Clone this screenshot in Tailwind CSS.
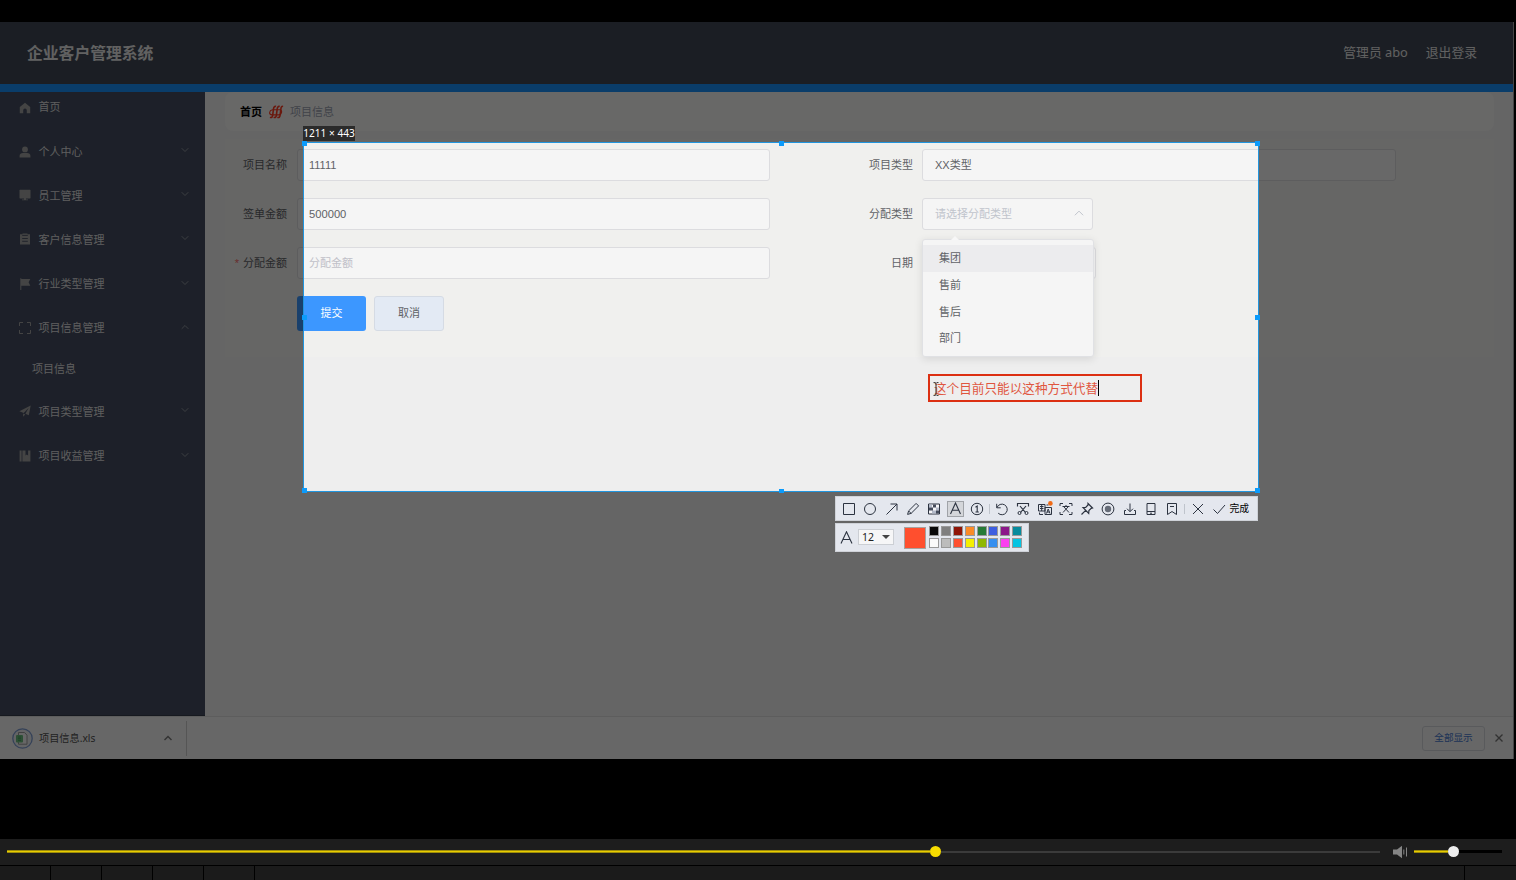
<!DOCTYPE html>
<html lang="zh-CN">
<head>
<meta charset="utf-8">
<title>企业客户管理系统</title>
<script src="https://cdn.jsdelivr.net/npm/@tailwindcss/browser@4"></script>
</head>
<body class="w-[1516px] h-[880px] overflow-hidden bg-black flex flex-col font-['Noto_Sans','Noto_Sans_CJK_SC',sans-serif] text-[11px]">
<svg class="hidden">
  <symbol id="down" viewBox="0 0 8 8"><path d="M.7 2.2 4 5.5l3.3-3.3" fill="none" stroke="currentColor" stroke-width=".8"/></symbol>
  <symbol id="up" viewBox="0 0 8 8"><path d="M.7 5.8 4 2.5l3.3 3.3" fill="none" stroke="currentColor" stroke-width=".8"/></symbol>
</svg>

<!-- Recorded desktop -->
<main class="relative mt-[22px] h-[737px] w-[1514px] overflow-hidden flex flex-col shrink-0 bg-[#ececec] border-r border-[#444]">
  <header class="h-[62px] shrink-0 bg-[#404855] flex items-center justify-between pl-[27px] pr-9 text-[#f4f4f4]">
    <h1 class="text-[15.8px] leading-none font-bold text-[#e6e6e6] pt-[2px]">企业客户管理系统</h1>
    <div class="flex gap-[18px] text-[12.8px] leading-none text-[#e4e4e4] pb-px"><span>管理员 abo</span><span>退出登录</span></div>
  </header>
  <div class="h-2 shrink-0 bg-[#1890fb]"></div>

  <div class="flex h-[624px] shrink-0">
    <nav class="w-[205px] shrink-0 bg-[#454d61] border-b border-[#343b4b] text-[#dedede] leading-none">
      <div class="h-[37px] pb-2 pl-[19px] flex items-center gap-[7.500px]"><svg class="size-3 mt-0.5 text-[#a0a0a0]" viewBox="0 0 12 12" fill="currentColor"><path d="M6 .8 11.2 5v6.2H7.8V8.4a1.8 1.8 0 0 0-3.6 0v2.8H.8V5z"/></svg><span>首页</span></div>
      <div class="h-[44.2px] pl-[19px] pr-4 flex items-center gap-[7.500px]"><svg class="size-3 mt-0.5 text-[#a0a0a0]" viewBox="0 0 12 12" fill="currentColor"><circle cx="6" cy="3.4" r="2.9"/><path d="M.6 11.5V9.7c0-1.8 1.5-2.6 3.2-2.6h4.4c1.7 0 3.2.8 3.2 2.6v1.8z"/></svg><span class="grow">个人中心</span><svg class="size-2 -mt-0.5 text-[#a0a4ab]"><use href="#down"/></svg></div>
      <div class="h-[44.2px] pl-[19px] pr-4 flex items-center gap-[7.500px]"><svg class="size-3 text-[#a0a0a0]" viewBox="0 0 12 12" fill="currentColor"><rect x=".5" y=".8" width="11" height="8.6" rx=".6"/><path d="M5 9h2v1.5h2v.8H3v-.8h2z"/></svg><span class="grow">员工管理</span><svg class="size-2 -mt-0.5 text-[#a0a4ab]"><use href="#down"/></svg></div>
      <div class="h-[44.2px] pl-[19px] pr-4 flex items-center gap-[7.500px]"><svg class="size-3 text-[#a0a0a0]" viewBox="0 0 12 12"><path fill="currentColor" d="M1 1.3h2.5V.4h5v.9H11v10.3H1z"/><path d="M3.2 2.4h5.6M3.2 5.5h5.6M3.2 8.3h5.6" stroke="#454d61" stroke-width=".9"/></svg><span class="grow">客户信息管理</span><svg class="size-2 -mt-0.5 text-[#a0a4ab]"><use href="#down"/></svg></div>
      <div class="h-[44.2px] pl-[19px] pr-4 flex items-center gap-[7.500px]"><svg class="size-3 text-[#a0a0a0]" viewBox="0 0 12 12" fill="currentColor"><path d="M1.3.3h1v.6h9L9.6 4.2l1.7 3.5h-9v4.2h-1z"/></svg><span class="grow">行业类型管理</span><svg class="size-2 -mt-0.5 text-[#a0a4ab]"><use href="#down"/></svg></div>
      <div class="h-[44.2px] pl-[19px] pr-4 flex items-center gap-[7.500px]"><svg class="size-3 text-[#a0a0a0]" viewBox="0 0 12 12" fill="none" stroke="currentColor"><path d="M.5 4V.5H4M8 .5h3.5V4M11.5 8v3.5H8M4 11.5H.5V8"/></svg><span class="grow">项目信息管理</span><svg class="size-2 -mt-0.5 text-[#a0a4ab]"><use href="#up"/></svg></div>
      <div class="h-[39.3px] pl-8 pb-[2px] flex items-center"><span>项目信息</span></div>
      <div class="h-[44.2px] pl-[19px] pr-4 flex items-center gap-[7.500px]"><svg class="size-3 text-[#a0a0a0]" viewBox="0 0 12 12" fill="currentColor"><path d="M11.7.6 9.8 10.2 6.4 8.7 9.6 3 4.7 7.9.4 6.2zM4.2 8.6l2 .9-2.1 2.3z"/></svg><span class="grow">项目类型管理</span><svg class="size-2 -mt-0.5 text-[#a0a4ab]"><use href="#down"/></svg></div>
      <div class="h-[44.2px] pl-[19px] pr-4 flex items-center gap-[7.500px]"><svg class="size-3 text-[#a0a0a0]" viewBox="0 0 12 12" fill="currentColor"><path d="M.6.6h2v11h-2zM3.4.6h3.1v5l1.3-1 1.3 1v-5h2.3v11h-8z"/></svg><span class="grow">项目收益管理</span><svg class="size-2 -mt-0.5 text-[#a0a4ab]"><use href="#down"/></svg></div>
    </nav>

    <section class="grow pl-5 pr-[19px] bg-[#eeeeee]">
      <div class="h-[39px] rounded-lg bg-[#f5f5f4] flex items-center pl-[15px] leading-none">
        <b class="text-black">首页</b>
        <svg class="w-4 h-[14px] mx-[6px]" viewBox="0 0 16 14" fill="none" stroke="#fa3a20" stroke-width="1.600"><path d="M2 12.200c1.500.8 2.500 0 2.700-2l.8-6.400C5.700 2 6.700 1 8 1.600M5.700 12.200c1.500.8 2.500 0 2.700-2l.8-6.400C9.400 2 10.400 1 11.700 1.600M9.400 12.200c1.500.8 2.500 0 2.700-2l.8-6.400C13.100 2 13.900 1 15 1.600"/><path d="M4.500 4.800C1 5.500.5 9.500 4 9.900M4.500 4.800h7.500c2.500.6 2 4.500-1 5.100H4" stroke-width="1.100"/></svg>
        <span class="text-[#9aa0ad]">项目信息</span>
      </div>
      <form class="mt-2 h-[218px] bg-[#f0f0ee] pt-[10px] flex text-[#606266] leading-none">
        <div class="w-[545px] shrink-0 flex flex-col gap-[17px]">
          <div class="h-8 flex items-center"><label class="w-[62px] text-right mr-[10px] pb-[2px]">项目名称</label><div class="grow h-8 rounded-[3px] border border-[#dcdcdf] bg-[#f5f5f5] flex items-center pl-[11px] font-['Liberation_Sans',sans-serif]">11111</div></div>
          <div class="h-8 flex items-center"><label class="w-[62px] text-right mr-[10px] pb-[2px]">签单金额</label><div class="grow h-8 rounded-[3px] border border-[#dcdcdf] bg-[#f5f5f5] flex items-center pl-[11px] pt-px font-['Liberation_Sans',sans-serif] text-[11.200px]">500000</div></div>
          <div class="h-8 flex items-center"><label class="w-[62px] text-right mr-[10px] pb-px whitespace-nowrap"><span class="text-[#f56c6c] mr-1 font-['Liberation_Sans',sans-serif]">*</span>分配金额</label><div class="grow h-8 rounded-[3px] border border-[#dcdcdf] bg-[#f5f5f5] flex items-center pl-[11px] pb-[2px] text-[#c0c0c8]">分配金额</div></div>
          <div class="flex gap-2"><div class="ml-[72px] w-[69px] h-[35px] rounded-[3px] bg-[#3c97ff] text-white flex items-center justify-center pb-[2px]">提交</div><div class="w-[70px] h-[35px] rounded-[3px] border border-[#d5dbe4] bg-[#e3eaf4] flex items-center justify-center pb-[2px]">取消</div></div>
        </div>
        <div class="ml-[83px] w-[543px] shrink-0 flex flex-col gap-[17px]">
          <div class="h-8 flex items-center"><label class="w-[60px] text-right mr-[9px] pb-[2px]">项目类型</label><div class="grow h-8 rounded-[3px] border border-[#dcdcdf] bg-[#f5f5f5] flex items-center pl-3 pt-px font-['Liberation_Sans','Noto_Sans_CJK_SC',sans-serif]"><span>XX类型</span></div></div>
          <div class="h-8 flex items-center"><label class="w-[60px] text-right mr-[9px] pb-[2px]">分配类型</label><div class="w-[171px] h-8 rounded-[3px] border border-[#dcdcdf] bg-[#f5f5f5] flex items-center justify-between pl-3 pr-2 pb-[2px] text-[#c0c4cc]"><span>请选择分配类型</span><svg class="size-[10px]"><use href="#up"/></svg></div></div>
          <div class="h-8 flex items-center"><label class="w-[60px] text-right mr-[9px] pb-[2px]">日期</label><div class="w-[174px] h-8 rounded-[3px] border border-[#dcdcdf] bg-[#f5f5f5]"></div></div>
        </div>
      </form>
    </section>
  </div>

  <footer class="h-[43px] shrink-0 bg-[#f3f3f3] border-t border-[#dcdcdc] flex items-center pl-3 pr-[10px] text-[#505050] leading-none">
    <svg class="size-[21px] mr-[6px]" viewBox="0 0 21 21"><circle cx="10.500" cy="10.500" r="9.700" fill="#e9ebee" stroke="#7d9bd0" stroke-width="1.300"/><path d="M6.500 4.500h6l2.500 2.700v9H6.500z" fill="#f3f3f3" stroke="#999"/><rect x="4" y="7" width="7" height="7.500" rx="1" fill="#6cbb7e"/><path d="M6 9h3M6 10.700h3M6 12.400h3" stroke="#3f9a55" stroke-width=".8"/></svg>
    <span class="text-[10.2px] w-[125px]">项目信息.xls</span>
    <svg class="size-2" viewBox="0 0 8 8"><path d="M.5 6 4 2.500 7.500 6" fill="none" stroke="#777" stroke-width="1.400"/></svg>
    <div class="ml-[14px] h-[35px] w-px bg-[#c9c9c9]"></div>
    <div class="ml-auto w-[63px] h-[25px] rounded-[3px] border border-[#d3d5d9] flex items-center justify-center text-[9.600px] text-[#4577cc]">全部显示</div>
    <svg class="ml-[10px] size-2" viewBox="0 0 8 8"><path d="m.5.5 7 7m0-7-7 7" stroke="#777" stroke-width="1.400"/></svg>
  </footer>

  <!-- Select dropdown -->
  <ul class="absolute left-[922px] top-[217px] w-[172px] h-[118px] rounded-[3px] border border-[#e0e1e4] bg-[#f5f5f5] shadow-[0_2px_9px_rgba(0,0,0,.11)] pt-[5px] text-[#606266] leading-[26.800px]">
    <li class="absolute left-[28px] -top-[4px] size-0 border-x-4 border-x-transparent border-b-4 border-b-[#f7f7f7]"></li>
    <li class="h-[26.800px] pl-4 bg-[#ececee]">集团</li><li class="h-[26.800px] pl-4">售前</li><li class="h-[26.800px] pl-4">售后</li><li class="h-[26.800px] pl-4">部门</li>
  </ul>

  <!-- Capture selection: everything outside it is dimmed -->
  <div class="absolute left-[304px] top-[121px] w-[954px] h-[348px] shadow-[0_0_0_2000px_rgba(0,0,0,.575)]"></div>
  <div class="absolute left-[303px] top-[120px] w-[956px] h-[350px] border border-[#2195de]">
    <i class="absolute -left-[2px] -top-[2px] size-[5px] bg-[#0c9bfb]"></i><i class="absolute left-[475px] -top-[2px] w-[5px] h-[5px] bg-[#0c9bfb]"></i><i class="absolute -right-[2px] -top-[2px] size-[5px] bg-[#0c9bfb]"></i>
    <i class="absolute -left-[2px] top-[172px] size-[5px] bg-[#0c9bfb]"></i><i class="absolute -right-[2px] top-[172px] size-[5px] bg-[#0c9bfb]"></i>
    <i class="absolute -left-[2px] -bottom-[2px] size-[5px] bg-[#0c9bfb]"></i><i class="absolute left-[475px] -bottom-[2px] w-[5px] h-1 bg-[#0c9bfb]"></i><i class="absolute -right-[2px] -bottom-[2px] size-[5px] bg-[#0c9bfb]"></i>
  </div>
  <div class="absolute left-[303px] top-[104px] w-[52px] h-[15px] bg-[#2b2b2b] text-white text-[10.100px] leading-[15px] flex justify-center whitespace-nowrap">1211 × 443</div>

  <div class="absolute left-[928px] top-[352px] w-[214px] h-[28px] border-2 border-[#dc2f12] flex items-center pl-1 text-[12.630px] leading-none text-[#e0563f] whitespace-nowrap">这个目前只能以这种方式代替<i class="w-px h-4 bg-black"></i>
    <svg class="absolute left-[3px] top-[6px] w-[6px] h-[14px]" viewBox="0 0 6 14"><path d="M.5.6h1.700L3 1.400 3.800.6h1.700M3 1.400v11.200M.5 13.400h1.700l.8-.8.8.8h1.700" fill="none" stroke="#333"/></svg>
  </div>

  <!-- Capture toolbar -->
  <div class="absolute left-[835px] top-[474px] w-[423px] h-[25px] bg-[#e4e7ee] border border-[#cfd2d8] flex items-center pl-[2.500px] text-[#2c3340] leading-none">
    <div class="w-[21.250px] shrink-0 flex justify-center"><svg class="size-[14px]" viewBox="0 0 14 14" fill="none" stroke="currentColor"><path d="M1.500 1.500h11v11h-11z"/></svg></div>
    <div class="w-[21.250px] shrink-0 flex justify-center"><svg class="size-[14px]" viewBox="0 0 14 14" fill="none" stroke="currentColor"><circle cx="7" cy="7" r="5.500"/></svg></div>
    <div class="w-[21.250px] shrink-0 flex justify-center"><svg class="size-[14px]" viewBox="0 0 14 14" fill="none" stroke="currentColor"><path d="M1.500 12.500 12 2M5.500 2H12v6.500"/></svg></div>
    <div class="w-[21.250px] shrink-0 flex justify-center"><svg class="size-[14px]" viewBox="0 0 14 14" fill="none" stroke="currentColor"><path d="m1.600 12.400 1-3.500 7.500-7.500 2.500 2.500-7.500 7.500zM2.600 8.900l2.500 2.500"/></svg></div>
    <div class="w-[21.250px] shrink-0 flex justify-center"><svg class="size-[14px]" viewBox="0 0 14 14"><path d="M1.500 2h11v10h-11z" fill="#f5f5f8" stroke="currentColor"/><path d="M2 2.500h3v3H2zM9 5.500h3v3H9zM5 8.500h4v3H5z" fill="#b3bac9"/><path d="M6 2.500h3v3H6zM2 5.500h4v3H2zM9 8.500h3v3H9z" fill="#444b5b"/></svg></div>
    <div class="w-[21.250px] shrink-0 flex justify-center"><div class="w-[17px] h-4 shrink-0 border border-[#a0a3a8] bg-[#d4d6da] flex justify-center items-center"><svg class="size-[13px]" viewBox="0 0 13 13" fill="none" stroke="currentColor" stroke-width="1.100"><path d="M1.500 12 6.500 1l5 11M3.300 8.200h6.400"/></svg></div></div>
    <div class="w-[21.250px] shrink-0 flex justify-center"><svg class="size-[14px]" viewBox="0 0 14 14" fill="none" stroke="currentColor"><circle cx="7" cy="7" r="5.700"/><path d="M5.500 5.200 7.200 4v6M5.500 10h3.300" stroke-width="1.100"/></svg></div>
    <div class="w-[4.250px] shrink-0 flex justify-center"><i class="w-px h-[10px] bg-[#bfc4cc]"></i></div>
    <div class="w-[21.250px] shrink-0 flex justify-center"><svg class="size-[14px]" viewBox="0 0 14 14" fill="none" stroke="currentColor"><path d="M1.700 1.800v4h4M2 5.500a5.300 5.300 0 1 1 1.200 5.700"/></svg></div>
    <div class="w-[21.250px] shrink-0 flex justify-center"><svg class="size-[14px]" viewBox="0 0 14 14" fill="none" stroke="currentColor"><path d="M1.500 4.500v-3h11v3M4 4l5.500 6.500M10 4l-5.500 6.500" stroke-width="1.150"/><circle cx="3.500" cy="11" r="1.500"/><circle cx="10.500" cy="11" r="1.500"/></svg></div>
    <div class="w-[21.250px] shrink-0 flex justify-center"><svg class="size-[16px]" viewBox="0 0 16 16" fill="none" stroke="currentColor"><path d="M1.500 3.500h6.500v6.500H1.500zM3 5.500h3.500M3 7.500h3.500M4.700 4v6M8 6.500h6.500v7H8zM9.500 12.500l1.700-4.500 1.800 4.500M10 11h2.500M2.500 11.500v2H6M9.500 4h2"/><circle cx="13.400" cy="2.400" r="2.300" fill="#f06a16" stroke="none"/></svg></div>
    <div class="w-[21.250px] shrink-0 flex justify-center"><svg class="size-[14px]" viewBox="0 0 14 14" fill="none" stroke="currentColor"><path d="M1 4V1.500h3M10 1.500h3V4M13 10v2.500h-3M4 12.500H1V10M3.500 4.500h7M7 3v1.500M9 5 4 10.500M5 5l5 5.500"/></svg></div>
    <div class="w-[21.250px] shrink-0 flex justify-center"><svg class="size-[14px]" viewBox="0 0 14 14" fill="none" stroke="currentColor" stroke-width="1.200"><path d="m8 1.500 4.500 4.500-1.300.3-2.300 2.300-.2 2.700L3 5.500l2.700-.2L8 3zM5.700 8.300l-4.200 4.200"/></svg></div>
    <div class="w-[21.250px] shrink-0 flex justify-center"><svg class="size-[14px]" viewBox="0 0 14 14"><circle cx="7" cy="7" r="5.900" fill="none" stroke="currentColor"/><circle cx="7" cy="7" r="3.200" fill="#666c78"/></svg></div>
    <div class="w-[21.250px] shrink-0 flex justify-center"><svg class="size-[14px]" viewBox="0 0 14 14" fill="none" stroke="currentColor"><path d="M7 1.500v8M4 6.700l3 3 3-3M3 8.500H1.500v4h11v-4H11"/></svg></div>
    <div class="w-[21.250px] shrink-0 flex justify-center"><svg class="size-[14px]" viewBox="0 0 14 14" fill="none" stroke="currentColor"><path d="M3 1.500h8v11H3zM3 9.500h8M6 11.200h2"/></svg></div>
    <div class="w-[21.250px] shrink-0 flex justify-center"><svg class="size-[14px]" viewBox="0 0 14 14" fill="none" stroke="currentColor"><path d="M2.500 1.500h9v11L7 9.500l-4.500 3zM5 4.500h4"/></svg></div>
    <div class="w-[4.250px] shrink-0 flex justify-center"><i class="w-px h-[10px] bg-[#bfc4cc]"></i></div>
    <div class="w-[21.250px] shrink-0 flex justify-center"><svg class="size-[14px]" viewBox="0 0 14 14" fill="none" stroke="currentColor"><path d="m2 2 10 10M12 2 2 12"/></svg></div>
    <div class="w-[21.250px] shrink-0 flex justify-center"><svg class="size-[14px]" viewBox="0 0 14 14" fill="none" stroke="currentColor"><path d="m1.500 7.500 4 4L13 3"/></svg></div>
    <span class="text-[9.800px] text-black whitespace-nowrap">完成</span>
  </div>

  <!-- Text tool options -->
  <div class="absolute left-[835px] top-[501px] w-[194px] h-[29px] bg-[#e4e7ee] border border-[#cfd2d8] flex items-center pl-1 leading-none">
    <svg class="size-[13px]" viewBox="0 0 13 13" fill="none" stroke="#2c3340" stroke-width="1.100"><path d="M1 12.500 6.500.8l5.500 11.700M3 8.500h7"/></svg>
    <div class="ml-[5px] mb-px w-9 h-4 border border-[#cccfd4] bg-[#f6f6f7] flex items-center justify-between pl-[3px] pr-[3px] text-[10.500px] text-[#222]"><span>12</span><i class="border-x-4 border-x-transparent border-t-4 border-t-[#444]"></i></div>
    <div class="ml-[10px] size-[22px] border border-[#a7a29f] bg-[#ff4f2e]"></div>
    <div class="ml-[3px] mb-px grid grid-cols-8 gap-x-[1.900px] gap-y-[2px]">
      <i class="size-[10px] border border-[#999] bg-[#080808]"></i><i class="size-[10px] border border-[#999] bg-[#7f7f7f]"></i><i class="size-[10px] border border-[#999] bg-[#8f1507]"></i><i class="size-[10px] border border-[#999] bg-[#fb8b28]"></i><i class="size-[10px] border border-[#999] bg-[#277a36]"></i><i class="size-[10px] border border-[#999] bg-[#3d5ee0]"></i><i class="size-[10px] border border-[#999] bg-[#8b1889]"></i><i class="size-[10px] border border-[#999] bg-[#078b9d]"></i>
      <i class="size-[10px] border border-[#999] bg-[#fafafa]"></i><i class="size-[10px] border border-[#999] bg-[#bcbcbc]"></i><i class="size-[10px] border border-[#999] bg-[#fd4f30]"></i><i class="size-[10px] border border-[#999] bg-[#f5ef00]"></i><i class="size-[10px] border border-[#999] bg-[#8fb802]"></i><i class="size-[10px] border border-[#999] bg-[#368ff0]"></i><i class="size-[10px] border border-[#999] bg-[#fb3ff0]"></i><i class="size-[10px] border border-[#999] bg-[#06c4e2]"></i>
    </div>
  </div>
</main>

<!-- Player controls -->
<div class="mt-20 h-[26px] shrink-0 bg-[#1d1d1d] flex items-center pl-[7px] pr-[14px] pb-px">
  <div class="w-[923px] h-[3px] bg-[#e8cc00] border-y border-[#9d8c0a]"></div>
  <div class="size-[11px] rounded-full bg-[#f7dc00]"></div>
  <div class="w-[439px] h-[2px] bg-[#3b3b3b]"></div>
  <svg class="ml-[13px] w-[15px] h-[14px]" viewBox="0 0 15 14" fill="#858585"><path d="M0 4.500h4L9 .8v12.400L4 9.500H0zM10.300 4.500h1v5h-1zM13 2.500h1v9h-1z"/></svg>
  <div class="ml-[6px] w-[34px] h-[3px] bg-[#e8cc00] border-y border-[#9d8c0a]"></div>
  <div class="size-[11px] rounded-full bg-[#eeeeee]"></div>
  <div class="grow h-[3px] bg-black"></div>
</div>
<div class="mt-px h-[14px] shrink-0 flex gap-px">
  <i class="w-[50px] bg-[#1b1b1b]"></i><i class="w-[50px] bg-[#1b1b1b]"></i><i class="w-[50px] bg-[#1b1b1b]"></i><i class="w-[50px] bg-[#1b1b1b]"></i><i class="w-[50px] bg-[#1b1b1b]"></i><i class="w-[1209px] bg-[#1b1b1b]"></i><i class="grow bg-[#1b1b1b]"></i>
</div>
</body>
</html>
